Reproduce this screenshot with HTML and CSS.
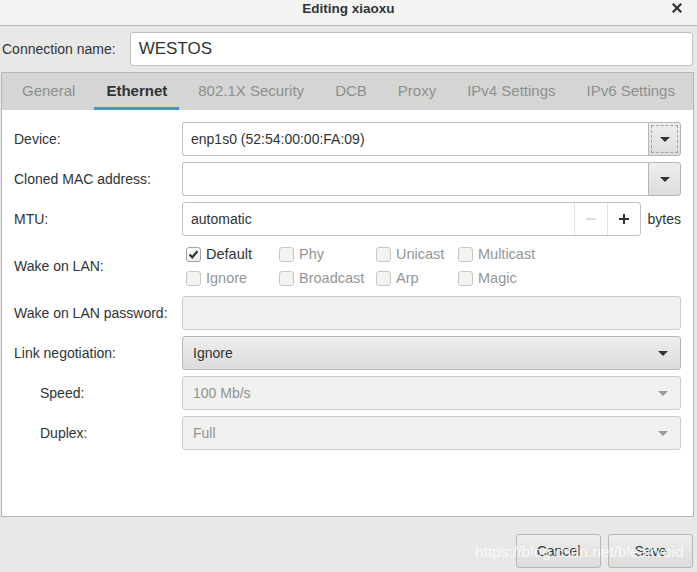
FILE: index.html
```html
<!DOCTYPE html>
<html lang="en">
<head>
<meta charset="utf-8">
<title>Editing xiaoxu</title>
<link rel="stylesheet" href="styles.css">
</head>
<body>
<div class="window">
  <header class="titlebar">
    <span></span>
    <span class="title">Editing xiaoxu</span>
    <span class="close"><svg width="10" height="10" viewBox="0 0 10 10"><path d="M1.5 1.5 L8.5 8.5 M8.5 1.5 L1.5 8.5" stroke="#2e3436" stroke-width="2.2" stroke-linecap="square"/></svg></span>
  </header>

  <div class="namerow">
    <span class="label">Connection name:</span>
    <div class="entry name"><span class="val">WESTOS</span></div>
  </div>

  <div class="notebook">
    <nav class="tabs">
      <span class="tab">General</span>
      <span class="tab active">Ethernet</span>
      <span class="tab">802.1X Security</span>
      <span class="tab">DCB</span>
      <span class="tab">Proxy</span>
      <span class="tab">IPv4 Settings</span>
      <span class="tab">IPv6 Settings</span>
    </nav>
    <div class="page">
      <div class="form">
        <span class="label">Device:</span>
        <div class="combo">
          <div class="combo-entry"><span class="val">enp1s0 (52:54:00:00:FA:09)</span></div>
          <div class="combo-btn focused"><span class="arrow"></span></div>
        </div>

        <span class="label">Cloned MAC address:</span>
        <div class="combo">
          <div class="combo-entry"></div>
          <div class="combo-btn"><span class="arrow"></span></div>
        </div>

        <span class="label">MTU:</span>
        <div class="spinrow">
          <div class="entry spin">
            <span class="val grow">automatic</span>
            <span class="sb"><svg width="12" height="12" viewBox="0 0 12 12"><path d="M1 6 H11" stroke="#cfcfcd" stroke-width="1.5"/></svg></span>
            <span class="sb"><svg width="12" height="12" viewBox="0 0 12 12"><path d="M1 6 H11 M6 1 V11" stroke="#2e3436" stroke-width="2"/></svg></span>
          </div>
          <span class="unit">bytes</span>
        </div>

        <span class="label">Wake on LAN:</span>
        <div class="wol">
          <span class="check on"><span class="box"><svg width="13" height="13" viewBox="0 0 13 13"><path d="M2.5 6.5 L5.3 9.3 L10.5 3.2" fill="none" stroke="#2e3436" stroke-width="2.2"/></svg></span>Default</span>
          <span class="check"><span class="box"></span>Phy</span>
          <span class="check"><span class="box"></span>Unicast</span>
          <span class="check"><span class="box"></span>Multicast</span>
          <span class="check"><span class="box"></span>Ignore</span>
          <span class="check"><span class="box"></span>Broadcast</span>
          <span class="check"><span class="box"></span>Arp</span>
          <span class="check"><span class="box"></span>Magic</span>
        </div>

        <span class="label">Wake on LAN password:</span>
        <div class="entry disabled"></div>

        <span class="label">Link negotiation:</span>
        <div class="dropdown"><span class="val grow">Ignore</span><span class="arrow"></span></div>

        <span class="label sub">Speed:</span>
        <div class="dropdown disabled"><span class="val grow">100 Mb/s</span><span class="arrow"></span></div>

        <span class="label sub">Duplex:</span>
        <div class="dropdown disabled"><span class="val grow">Full</span><span class="arrow"></span></div>
      </div>
    </div>
  </div>

  <footer class="actions">
    <button class="btn">Cancel</button>
    <button class="btn">Save</button>
  </footer>

  <div class="watermark">https://blog.csdn.net/bleakvoid</div>
</div>
</body>
</html>
```

FILE: styles.css
```css
* { box-sizing: border-box; }
html, body { margin: 0; padding: 0; }
body {
  width: 697px;
  height: 572px;
  overflow: hidden;
  background: #e8e8e7;
  font-family: "Liberation Sans", Arial, sans-serif;
  font-size: 14px;
  color: #2e3436;
}
.window { position: relative; width: 697px; height: 572px; }

.titlebar {
  height: 26px;
  background: #f3f3f2;
  border-bottom: 1px solid #b9b9b6;
  display: grid;
  grid-template-columns: 1fr auto 1fr;
  align-items: start;
}
.title { font-weight: bold; font-size: 13.5px; line-height: 17px; }
.close { justify-self: end; margin-right: 15px; margin-top: 3px; display: flex; }

.namerow {
  display: flex;
  align-items: center;
  gap: 14px;
  margin: 6px 4px 6px 2px;
}
.entry {
  background: #fff;
  border: 1px solid #c0c0bd;
  border-radius: 3px;
  display: flex;
  align-items: center;
  height: 34px;
}
.entry.name { flex: 1; font-size: 17px; padding-left: 8px; }
.val { white-space: nowrap; }
.grow { flex: 1; }

.notebook {
  margin-left: 1px;
  width: 693px;
  height: 445px;
  border: 1px solid #b6b6b3;
  display: flex;
  flex-direction: column;
}
.tabs {
  height: 37px;
  flex: none;
  background: #d5d5d3;
  display: flex;
  gap: 7px;
  padding-left: 8px;
}
.tab {
  padding: 1px 12px 0;
  font-size: 15px;
  color: #8d9090;
  display: flex;
  align-items: center;
  border-bottom: 3px solid transparent;
}
.tab.active { color: #2e3436; font-weight: bold; border-bottom-color: #4a90d9; }

.page {
  flex: 1;
  background: #fff;
  padding: 12px 12px 0 12px;
}
.form {
  display: grid;
  grid-template-columns: 156px 1fr;
  grid-template-rows: 34px 34px 34px 48px 34px 34px 34px 34px;
  column-gap: 12px;
  row-gap: 6px;
}
.label { align-self: center; white-space: nowrap; }
.label.sub { padding-left: 26px; }

.combo { display: flex; height: 34px; }
.combo-entry {
  flex: 1;
  background: #fff;
  border: 1px solid #c0c0bd;
  border-right: none;
  border-radius: 3px 0 0 3px;
  display: flex;
  align-items: center;
  padding-left: 8px;
}
.combo-btn {
  width: 33px;
  border: 1px solid #b6b6b3;
  border-radius: 0 3px 3px 0;
  background: linear-gradient(#eeeeed, #dcdcda);
  display: flex;
  align-items: center;
  justify-content: center;
  position: relative;
}
.combo-btn.focused::after {
  content: "";
  position: absolute;
  inset: 2px;
  border: 1px dashed #a2a5a6;
}
.arrow {
  width: 0;
  height: 0;
  border-left: 5px solid transparent;
  border-right: 5px solid transparent;
  border-top: 5px solid #2e3436;
}

.spinrow { display: flex; align-items: center; gap: 7px; }
.spin { flex: 1; padding-left: 8px; }
.sb {
  width: 33px;
  height: 100%;
  border-left: 1px solid #e1e1df;
  display: flex;
  align-items: center;
  justify-content: center;
}
.unit { white-space: nowrap; }

.wol {
  display: grid;
  grid-template-columns: 93px 97px 82px auto;
  grid-template-rows: 24px 24px;
  align-items: center;
  padding-left: 4px;
  font-size: 14.5px;
}
.check { display: flex; align-items: center; gap: 5px; color: #939696; white-space: nowrap; }
.box {
  width: 15px;
  height: 15px;
  border: 1px solid #c8c8c5;
  border-radius: 3px;
  background: #f3f3f2;
  display: flex;
  align-items: center;
  justify-content: center;
}
.check.on { color: #2e3436; }
.check.on .box { background: linear-gradient(#ffffff, #eeeeed); border-color: #a2a2a0; }

.entry.disabled { background: #f1f1f0; border-color: #cdcdca; }

.dropdown {
  display: flex;
  align-items: center;
  height: 34px;
  border: 1px solid #b6b6b3;
  border-radius: 3px;
  background: linear-gradient(#eeeeed, #dcdcda);
  padding: 0 12px 0 10px;
}
.dropdown.disabled { background: #f1f1f0; border-color: #cdcdca; color: #8f9292; }
.dropdown.disabled .arrow { border-top-color: #9a9c9c; }

.actions {
  display: flex;
  justify-content: flex-end;
  gap: 7px;
  padding: 17px 4px 0 0;
}
.btn {
  width: 85px;
  height: 34px;
  font-family: inherit;
  font-size: 14px;
  color: #2e3436;
  border: 1px solid #b6b6b3;
  border-radius: 3px;
  background: linear-gradient(#eeeeed, #dcdcda);
  padding: 0;
}

.watermark {
  position: absolute;
  left: 475px;
  top: 543px;
  font-size: 15.5px;
  color: rgba(255, 255, 255, 0.78);
  white-space: nowrap;
  pointer-events: none;
}
```
